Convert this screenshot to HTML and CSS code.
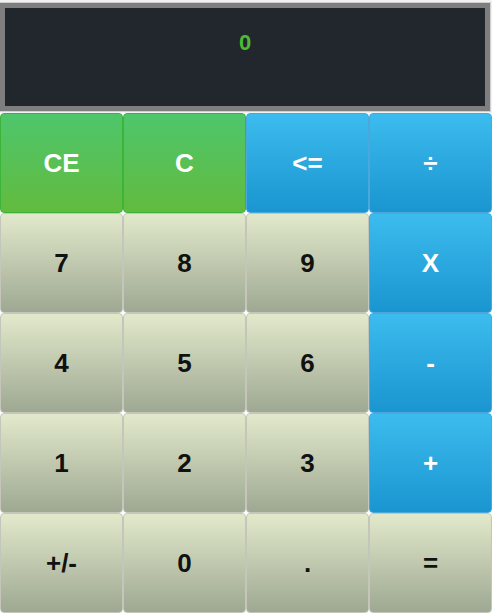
FILE: index.html
```html
<!DOCTYPE html>
<html>
<head>
<meta charset="utf-8">
<link rel="stylesheet" href="styles.css">
</head>
<body>
<div class="calc">
  <div class="display"><span class="value">0</span></div>
  <div class="keys">
    <button class="key green">CE</button>
    <button class="key green">C</button>
    <button class="key blue">&lt;=</button>
    <button class="key blue">÷</button>
    <button class="key num">7</button>
    <button class="key num">8</button>
    <button class="key num">9</button>
    <button class="key blue">X</button>
    <button class="key num">4</button>
    <button class="key num">5</button>
    <button class="key num">6</button>
    <button class="key blue">-</button>
    <button class="key num">1</button>
    <button class="key num">2</button>
    <button class="key num">3</button>
    <button class="key blue">+</button>
    <button class="key num">+/-</button>
    <button class="key num">0</button>
    <button class="key num">.</button>
    <button class="key num">=</button>
  </div>
</div>
</body>
</html>
```
FILE: styles.css
```css
html, body {
  margin: 0;
  padding: 0;
  background: #ffffff;
  font-family: "Liberation Sans", Arial, sans-serif;
}
.calc {
  width: 492px;
  height: 613px;
  display: flex;
  flex-direction: column;
  background: #f2f2f2;
}
.display {
  box-sizing: border-box;
  width: 490px;
  height: 108px;
  margin: 3px 2px 2px 0;
  border: 5px solid #7e7e7e;
  background: #22262d;
  text-align: center;
  padding-top: 22px;
  box-shadow: 0 0 0 1px #d0d0d0;
}
.value {
  color: #4dba33;
  font-weight: bold;
  font-size: 22px;
  line-height: 25px;
}
.keys {
  display: grid;
  grid-template-columns: repeat(4, 123px);
  grid-template-rows: repeat(5, 100px);
  background: #ffffff;
}
.key {
  margin: 0;
  box-sizing: border-box;
  border-radius: 4px;
  font-family: "Liberation Sans", Arial, sans-serif;
  font-weight: bold;
  font-size: 26px;
  padding: 0;
  cursor: pointer;
}
.green {
  color: #ffffff;
  border: 1px solid #3cb43a;
  background: linear-gradient(to bottom, #4ec66c, #62bb3e);
}
.blue {
  color: #ffffff;
  border: 1px solid #4aa8dd;
  background: linear-gradient(to bottom, #3cbcee, #1a95d0);
}
.num {
  color: #111111;
  border: 1px solid #c4c6bc;
  background: linear-gradient(to bottom, #e2e9cb, #9ea892);
}
```
